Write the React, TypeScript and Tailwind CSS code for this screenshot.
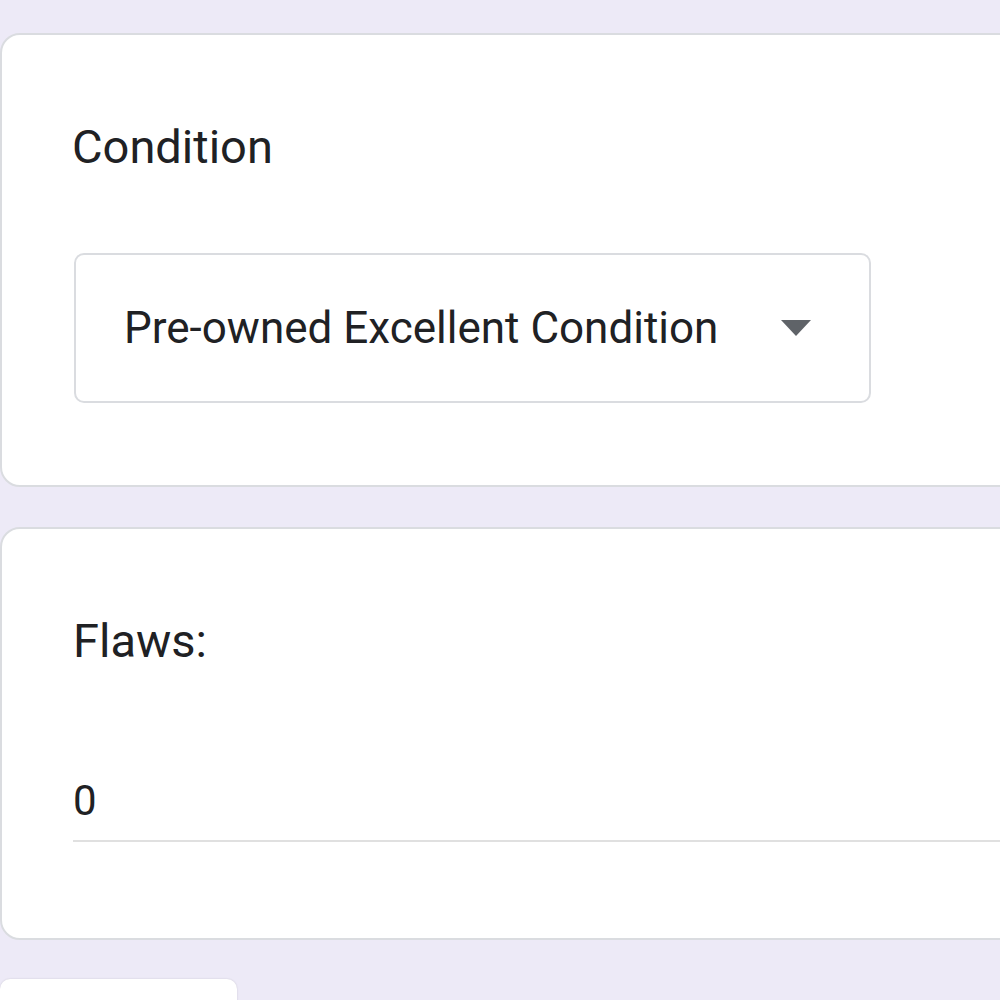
import React from 'react';

const App: React.FC = () => {
  return (
    <div
      className="h-[1000px] w-[1000px] overflow-hidden bg-[#edeaf7] text-[#202124]"
      style={{ fontFamily: 'Roboto, "Liberation Sans", sans-serif' }}
    >
      <div className="flex w-[1040px] flex-col pt-[33px]">
        {/* Condition card */}
        <div className="h-[454px] rounded-[20px] border-2 border-[#dadce0] bg-white pl-[70px] pt-[80px]">
          <div className="text-[47px] leading-[64px]">Condition</div>
          <div className="ml-[2px] mt-[74px] flex h-[150px] w-[797px] items-center rounded-[10px] border-2 border-[#dadce0] pl-[48px] pr-[58px]">
            <span className="flex-1 text-[44px] leading-none">Pre-owned Excellent Condition</span>
            <svg width="30" height="16" viewBox="0 0 30 16">
              <path d="M0 0 L30 0 L15 16 Z" fill="#5f6368" />
            </svg>
          </div>
        </div>

        {/* Flaws card */}
        <div className="mt-[40px] h-[413px] rounded-[20px] border-2 border-[#dadce0] bg-white pl-[71px] pt-[80px]">
          <div className="text-[47px] leading-[64px]">Flaws:</div>
          <div className="mt-[103px] border-b-2 border-[#e0e0e0] pb-[14px] text-[42px] leading-[50px]">0</div>
        </div>

        {/* next button */}
        <div className="mt-[39px] h-[40px] w-[237px] rounded-[10px] bg-white shadow-[0_0_2px_rgba(0,0,0,0.15)]" />
      </div>
    </div>
  );
};

export default App;
